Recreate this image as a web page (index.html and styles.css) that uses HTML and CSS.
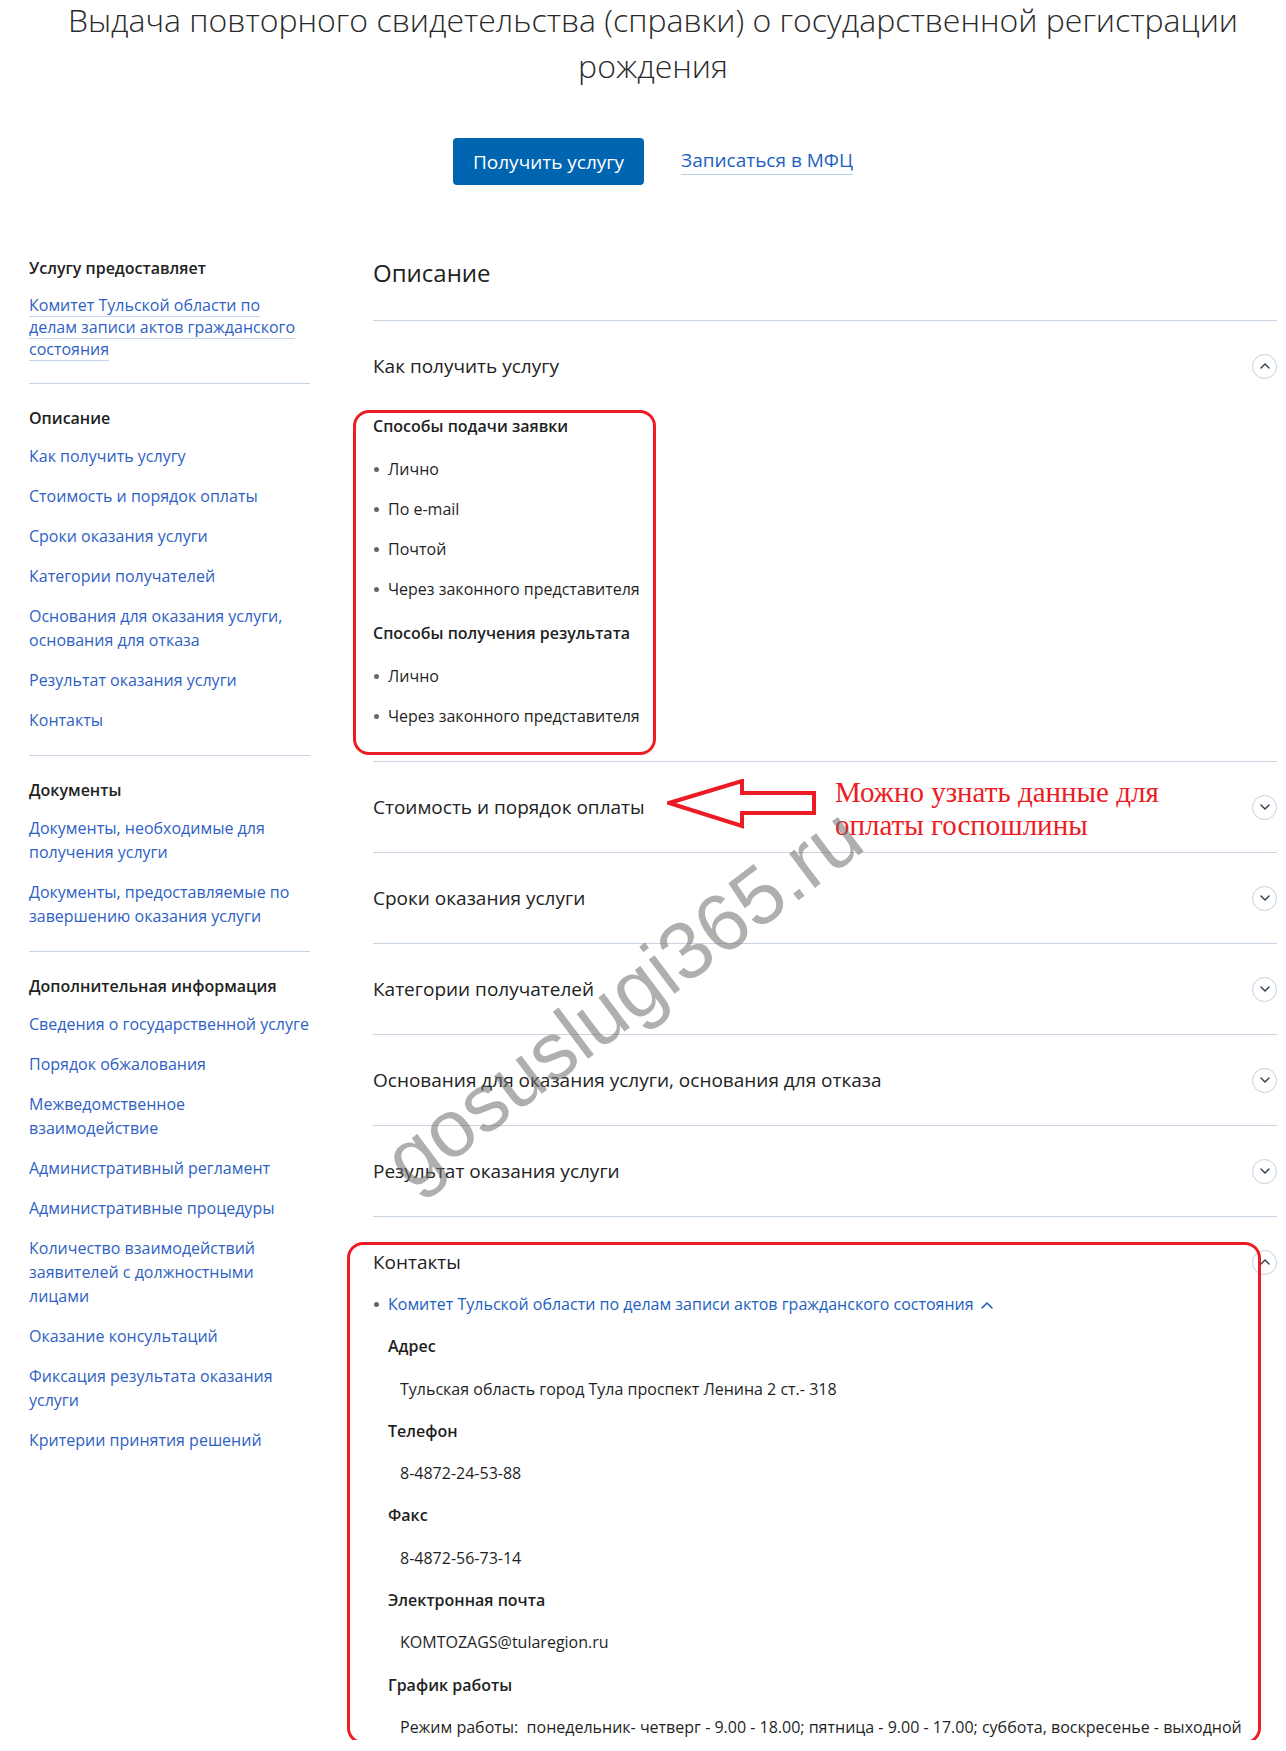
FILE: index.html
```html
<!DOCTYPE html>
<html lang="ru">
<head>
  <meta charset="UTF-8">
  <meta name="viewport" content="width=device-width, initial-scale=1.0">
  <title>Выдача повторного свидетельства о рождении</title>
  <link rel="stylesheet" href="styles.css">
</head>
<body>
  <div class="page">
    <header class="hero">
      <h1 class="hero-title">Выдача повторного свидетельства (справки) о государственной регистрации рождения</h1>
      <div class="hero-actions">
        <a class="btn-primary" href="#">Получить услугу</a>
        <a class="link-mfc" href="#">Записаться в МФЦ</a>
      </div>
    </header>

    <div class="layout">
      <aside class="sidebar">
        <div class="side-block">
          <h4 class="side-title">Услугу предоставляет</h4>
          <p class="side-org"><a href="#">Комитет Тульской области по делам записи актов гражданского состояния</a></p>
        </div>
        <div class="side-block">
          <h4 class="side-title">Описание</h4>
          <ul class="side-links">
            <li><a href="#">Как получить услугу</a></li>
            <li><a href="#">Стоимость и порядок оплаты</a></li>
            <li><a href="#">Сроки оказания услуги</a></li>
            <li><a href="#">Категории получателей</a></li>
            <li><a href="#">Основания для оказания услуги, основания для отказа</a></li>
            <li><a href="#">Результат оказания услуги</a></li>
            <li><a href="#">Контакты</a></li>
          </ul>
        </div>
        <div class="side-block">
          <h4 class="side-title">Документы</h4>
          <ul class="side-links">
            <li><a href="#">Документы, необходимые для получения услуги</a></li>
            <li><a href="#">Документы, предоставляемые по завершению оказания услуги</a></li>
          </ul>
        </div>
        <div class="side-block">
          <h4 class="side-title">Дополнительная информация</h4>
          <ul class="side-links">
            <li><a href="#">Сведения о государственной услуге</a></li>
            <li><a href="#">Порядок обжалования</a></li>
            <li><a href="#">Межведомственное взаимодействие</a></li>
            <li><a href="#">Административный регламент</a></li>
            <li><a href="#">Административные процедуры</a></li>
            <li><a href="#">Количество взаимодействий заявителей с должностными лицами</a></li>
            <li><a href="#">Оказание консультаций</a></li>
            <li><a href="#">Фиксация результата оказания услуги</a></li>
            <li><a href="#">Критерии принятия решений</a></li>
          </ul>
        </div>
      </aside>

      <main class="content">
        <h2 class="content-title">Описание</h2>

        <section class="acc">
          <div class="acc-head">
            <span class="acc-title">Как получить услугу</span>
            <span class="acc-icon"><svg width="14" height="14" viewBox="0 0 14 14"><path d="M3 9l4-4 4 4" fill="none" stroke="#2d3a4a" stroke-width="1.4" stroke-linecap="round" stroke-linejoin="round"/></svg></span>
          </div>
          <div class="acc-body">
            <h4>Способы подачи заявки</h4>
            <ul class="dot-list">
              <li>Лично</li>
              <li>По e-mail</li>
              <li>Почтой</li>
              <li>Через законного представителя</li>
            </ul>
            <h4>Способы получения результата</h4>
            <ul class="dot-list">
              <li>Лично</li>
              <li>Через законного представителя</li>
            </ul>
          </div>
        </section>

        <section class="acc">
          <div class="acc-head">
            <span class="acc-title">Стоимость и порядок оплаты</span>
            <span class="acc-icon"><svg width="14" height="14" viewBox="0 0 14 14"><path d="M3 5l4 4 4-4" fill="none" stroke="#2d3a4a" stroke-width="1.4" stroke-linecap="round" stroke-linejoin="round"/></svg></span>
          </div>
        </section>

        <section class="acc">
          <div class="acc-head">
            <span class="acc-title">Сроки оказания услуги</span>
            <span class="acc-icon"><svg width="14" height="14" viewBox="0 0 14 14"><path d="M3 5l4 4 4-4" fill="none" stroke="#2d3a4a" stroke-width="1.4" stroke-linecap="round" stroke-linejoin="round"/></svg></span>
          </div>
        </section>

        <section class="acc">
          <div class="acc-head">
            <span class="acc-title">Категории получателей</span>
            <span class="acc-icon"><svg width="14" height="14" viewBox="0 0 14 14"><path d="M3 5l4 4 4-4" fill="none" stroke="#2d3a4a" stroke-width="1.4" stroke-linecap="round" stroke-linejoin="round"/></svg></span>
          </div>
        </section>

        <section class="acc">
          <div class="acc-head">
            <span class="acc-title">Основания для оказания услуги, основания для отказа</span>
            <span class="acc-icon"><svg width="14" height="14" viewBox="0 0 14 14"><path d="M3 5l4 4 4-4" fill="none" stroke="#2d3a4a" stroke-width="1.4" stroke-linecap="round" stroke-linejoin="round"/></svg></span>
          </div>
        </section>

        <section class="acc">
          <div class="acc-head">
            <span class="acc-title">Результат оказания услуги</span>
            <span class="acc-icon"><svg width="14" height="14" viewBox="0 0 14 14"><path d="M3 5l4 4 4-4" fill="none" stroke="#2d3a4a" stroke-width="1.4" stroke-linecap="round" stroke-linejoin="round"/></svg></span>
          </div>
        </section>

        <section class="acc acc-contacts">
          <div class="acc-head">
            <span class="acc-title">Контакты</span>
            <span class="acc-icon"><svg width="14" height="14" viewBox="0 0 14 14"><path d="M3 9l4-4 4 4" fill="none" stroke="#2d3a4a" stroke-width="1.4" stroke-linecap="round" stroke-linejoin="round"/></svg></span>
          </div>
          <div class="acc-body">
            <ul class="dot-list org-list">
              <li>
                <a class="org-link" href="#">Комитет Тульской области по делам записи актов гражданского состояния
                  <svg width="14" height="10" viewBox="0 0 14 10"><path d="M2 8l5-5 5 5" fill="none" stroke="#1d5fc0" stroke-width="1.6" stroke-linecap="round" stroke-linejoin="round"/></svg></a>
                <dl class="contact-info">
                  <dt>Адрес</dt>
                  <dd>Тульская область город Тула проспект Ленина 2 ст.- 318</dd>
                  <dt>Телефон</dt>
                  <dd>8-4872-24-53-88</dd>
                  <dt>Факс</dt>
                  <dd>8-4872-56-73-14</dd>
                  <dt>Электронная почта</dt>
                  <dd>KOMTOZAGS@tularegion.ru</dd>
                  <dt>График работы</dt>
                  <dd>Режим работы:&nbsp; понедельник- четверг - 9.00 - 18.00; пятница - 9.00 - 17.00; суббота, воскресенье - выходной</dd>
                </dl>
              </li>
            </ul>
          </div>
        </section>

        <!-- annotations drawn over the screenshot -->
        <div class="mark mark-ways"></div>
        <div class="mark mark-contacts"></div>
        <svg class="note-arrow" width="150" height="50" viewBox="0 0 150 50">
          <path d="M2 24 L75 2 L75 14 L147 14 L147 34 L75 34 L75 47 Z" fill="none" stroke="#ed1c24" stroke-width="4" stroke-linejoin="miter"/>
        </svg>
        <div class="note-text">Можно узнать данные для<br>оплаты госпошлины</div>
        <div class="watermark">gosuslugi365.ru</div>
      </main>
    </div>
  </div>
</body>
</html>
```

FILE: styles.css
```css
body {
  margin: 0;
  background: #fff;
  color: #1f1f1f;
  font-family: "Open Sans", Arial, sans-serif;
}
a {
  text-decoration: none;
}
.page {
  padding: 0 9px 0 29px;
}

/* header */
.hero {
  text-align: center;
}
.hero-title {
  margin: -3px 0 0;
  font-size: 32px;
  font-weight: 300;
  line-height: 46px;
  color: #2a2a2a;
}
.hero-actions {
  display: flex;
  justify-content: center;
  align-items: center;
  gap: 37px;
  margin-top: 49px;
}
.btn-primary {
  display: inline-flex;
  align-items: center;
  height: 47px;
  padding: 0 20px;
  background: #0065b1;
  color: #fff;
  font-size: 19px;
  border-radius: 4px;
}
.link-mfc {
  color: #1d5fc0;
  font-size: 19px;
  line-height: 25px;
  border-bottom: 1px solid #b9cbe6;
  padding-bottom: 1px;
}

/* two columns */
.layout {
  display: flex;
  gap: 63px;
  margin-top: 71px;
}
.sidebar {
  flex: none;
  width: 281px;
}
.side-block {
  padding: 22px 0 23px;
  border-bottom: 1px solid #c9d5e3;
}
.side-block:first-child {
  padding-top: 0;
}
.side-block:last-child {
  border-bottom: none;
}
.side-title {
  margin: 0;
  font-size: 16px;
  font-weight: 600;
  line-height: 24px;
  color: #222;
}
.side-org {
  margin: 14px 0 0;
  font-size: 16px;
  line-height: 22px;
}
.side-org a {
  color: #2f5fc4;
  border-bottom: 1px solid #c5d4ea;
}
.side-links {
  list-style: none;
  margin: 14px 0 0;
  padding: 0;
  display: flex;
  flex-direction: column;
  gap: 16px;
}
.side-links a {
  display: block;
  font-size: 16px;
  line-height: 24px;
  color: #2f5fc4;
}

/* main column */
.content {
  flex: 1;
  position: relative;
}
.content-title {
  margin: 0;
  padding-bottom: 30px;
  border-bottom: 1px solid #c9d5e3;
  font-size: 24px;
  font-weight: 400;
  line-height: 34px;
  color: #222;
}
.acc {
  border-bottom: 1px solid #c9d5e3;
}
.acc-head {
  display: flex;
  align-items: center;
  justify-content: space-between;
  height: 90px;
}
.acc-title {
  font-size: 19px;
  color: #222;
}
.acc-icon {
  width: 25px;
  height: 25px;
  box-sizing: border-box;
  border: 1px solid #c3d1e1;
  border-radius: 50%;
  display: flex;
  align-items: center;
  justify-content: center;
}
.acc-body {
  padding: 2px 0 32px;
}
.acc-body h4 {
  margin: 18px 0 0;
  font-size: 16px;
  font-weight: 600;
  line-height: 26px;
}
.acc-body h4:first-child {
  margin-top: 0;
}
.dot-list {
  list-style: none;
  margin: 17px 0 0;
  padding: 0;
  display: flex;
  flex-direction: column;
  gap: 14px;
}
.dot-list li {
  position: relative;
  padding-left: 15px;
  font-size: 16px;
  line-height: 26px;
}
.dot-list li::before {
  content: "";
  position: absolute;
  left: 1px;
  top: 11px;
  width: 5px;
  height: 5px;
  border-radius: 50%;
  background: #666;
}

/* contacts */
.acc-contacts {
  border-bottom: none;
}
.acc-contacts .acc-body {
  margin-top: -18px;
  padding-bottom: 0;
}
.org-list {
  margin-top: 0;
}
.org-link {
  color: #1d5fc0;
}
.org-link svg {
  margin-left: 2px;
}
.contact-info {
  margin: 0;
}
.contact-info dt {
  margin-top: 16.3px;
  font-weight: 600;
  line-height: 26px;
}
.contact-info dd {
  margin: 16.3px 0 0 12px;
  line-height: 26px;
  white-space: nowrap;
}

/* annotations */
.mark {
  position: absolute;
  box-sizing: border-box;
  border: 3px solid #ed1c24;
  border-radius: 16px;
}
.mark-ways {
  left: -20px;
  top: 154px;
  width: 303px;
  height: 345px;
}
.mark-contacts {
  left: -26px;
  top: 986px;
  width: 914px;
  height: 502px;
}
.note-arrow {
  position: absolute;
  left: 294px;
  top: 523px;
}
.note-text {
  position: absolute;
  left: 462px;
  top: 520px;
  font-family: "Liberation Serif", "Times New Roman", serif;
  font-size: 29px;
  line-height: 33px;
  color: #ed1c24;
}
.watermark {
  position: absolute;
  left: 250px;
  top: 742px;
  transform: translate(-50%, -50%) rotate(-37deg);
  font-family: "Liberation Sans", Arial, sans-serif;
  font-size: 81px;
  color: rgba(110, 110, 110, 0.55);
  white-space: nowrap;
}
```
